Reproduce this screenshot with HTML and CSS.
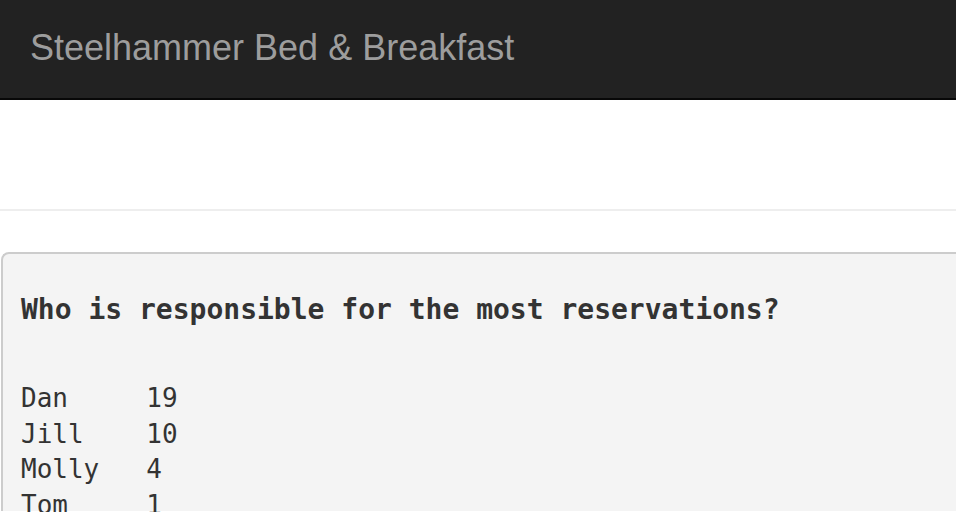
FILE: index.html
```html
<!DOCTYPE html>
<html>
<head>
<meta charset="utf-8">
<link rel="stylesheet" href="styles.css">
</head>
<body>
<nav class="navbar"><span class="brand">Steelhammer Bed &amp; Breakfast</span></nav>
<div class="spacer"></div>
<hr class="rule">
<div class="content">
<pre class="output"><b class="q">Who is responsible for the most reservations?</b>

<span class="rows">Dan     19
Jill    10
Molly   4
Tom     1</span></pre>
</div>
</body>
</html>
```
FILE: styles.css
```css
html, body { margin: 0; padding: 0; background: #fff; }
body { width: 956px; height: 512px; overflow: hidden; }
.navbar {
  height: 98px;
  background: #222;
  border-bottom: 2px solid #080808;
  display: flex;
  align-items: center;
  padding-left: 30px;
}
.brand {
  font-family: "Liberation Sans", Arial, sans-serif;
  font-size: 36px;
  color: #9d9d9d;
  line-height: 1;
  margin-top: -2px;
}
.spacer { height: 109px; }
.rule { margin: 0; border: 0; border-top: 2px solid #eee; height: 0; }
.content { padding-top: 41px; padding-left: 1px; height: 261px; overflow: hidden; }
.output {
  margin: 0;
  background: #f4f4f4;
  border: 2px solid #ccc;
  border-right: 0;
  border-bottom: 0;
  border-radius: 8px 0 0 0;
  padding: 38px 0 0 18px;
  height: 259px;
  box-sizing: border-box;
  font-family: "DejaVu Sans Mono", monospace;
  font-size: 26px;
  line-height: 35.5px;
  color: #333;
}
.q { font-size: 28px; font-weight: bold; display: inline-block; line-height: 35.5px; margin-bottom: 18px; }
```
